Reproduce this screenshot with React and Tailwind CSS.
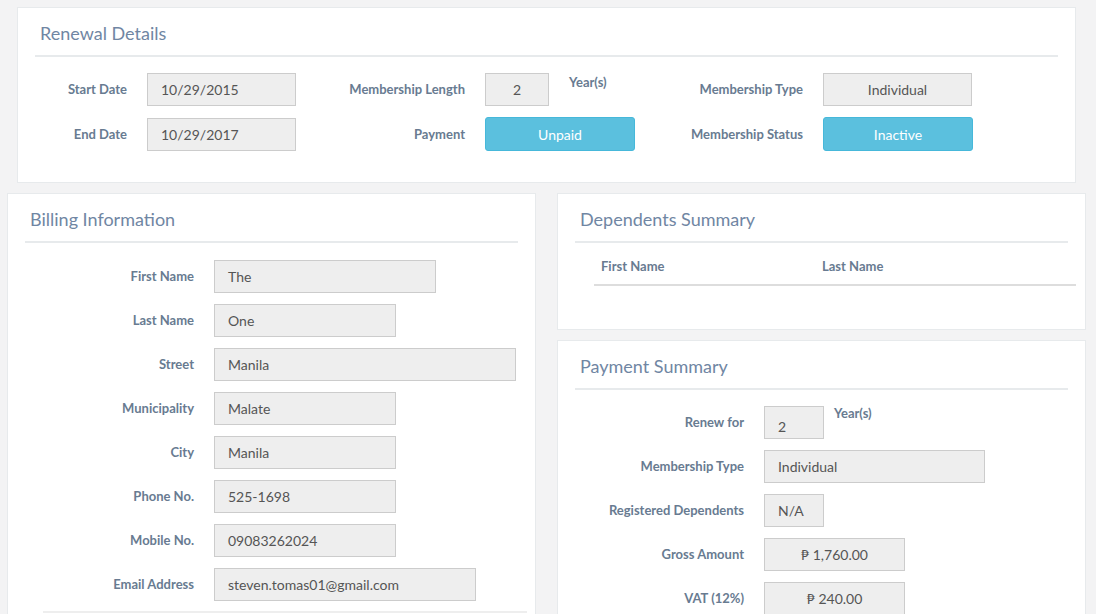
const font = { fontFamily: "Lato, 'Open Sans', sans-serif" };

function Field({ value, w, center, className = "" }) {
  return (
    <div
      className={`h-[33px] border border-[#cccccc] bg-[#eeeeee] text-[14px] text-[#555555] flex items-center ${
        center ? "justify-center" : "pl-[13px]"
      } ${className}`}
      style={{ width: w }}
    >
      {value}
    </div>
  );
}

function InfoButton({ children }) {
  return (
    <div className="h-[34px] w-[150px] rounded-[3px] border border-[#46b8da] bg-[#5bc0de] text-white text-[14px] flex items-center justify-center">
      {children}
    </div>
  );
}

function Label({ children, w }) {
  return (
    <div className="text-right text-[13px] font-bold text-[#687b91] shrink-0 pt-[1px]" style={{ width: w }}>
      {children}
    </div>
  );
}

function Card({ title, children, className = "" }) {
  return (
    <div className={`bg-white border border-[#e7eaec] px-[17px] ${className}`}>
      <div className="pt-[14px] pb-[11px] pl-[5px] text-[18px] leading-[22px] text-[#7086a3]">{title}</div>
      <div className="h-[2px] bg-[#e7eaec]" />
      {children}
    </div>
  );
}

function FormRow({ label, children }) {
  return (
    <div className="flex items-center">
      <Label w="169px">{label}</Label>
      <div className="ml-[20px] flex items-start">{children}</div>
    </div>
  );
}

export default function App() {
  return (
    <div className="min-h-screen bg-[#f3f3f4] pt-[7px] pb-6" style={font}>
      <Card title="Renewal Details" className="ml-[17px] w-[1059px] pb-[31px]">
        <div className="mt-[16px] flex flex-col gap-[11px]">
          <div className="flex items-center">
            <Label w="92px">Start Date</Label>
            <Field value="10/29/2015" w="149px" className="ml-[20px]" />
            <Label w="169px">Membership Length</Label>
            <div className="ml-[20px] w-[150px] flex items-start">
              <Field value="2" w="64px" center />
              <span className="ml-[20px] text-[13px] font-bold text-[#687b91] leading-[18px]">Year(s)</span>
            </div>
            <Label w="168px">Membership Type</Label>
            <Field value="Individual" w="149px" center className="ml-[20px]" />
          </div>
          <div className="flex items-center">
            <Label w="92px">End Date</Label>
            <Field value="10/29/2017" w="149px" className="ml-[20px]" />
            <Label w="169px">Payment</Label>
            <div className="ml-[20px]">
              <InfoButton>Unpaid</InfoButton>
            </div>
            <Label w="168px">Membership Status</Label>
            <div className="ml-[20px]">
              <InfoButton>Inactive</InfoButton>
            </div>
          </div>
        </div>
      </Card>

      <div className="mt-[10px] ml-[7px] flex gap-[21px] items-start">
        <Card title="Billing Information" className="w-[529px]">
          <div className="mt-[17px] flex flex-col gap-[11px]">
            <FormRow label="First Name"><Field value="The" w="222px" /></FormRow>
            <FormRow label="Last Name"><Field value="One" w="182px" /></FormRow>
            <FormRow label="Street"><Field value="Manila" w="302px" /></FormRow>
            <FormRow label="Municipality"><Field value="Malate" w="182px" /></FormRow>
            <FormRow label="City"><Field value="Manila" w="182px" /></FormRow>
            <FormRow label="Phone No."><Field value="525-1698" w="182px" /></FormRow>
            <FormRow label="Mobile No."><Field value="09083262024" w="182px" /></FormRow>
            <FormRow label="Email Address"><Field value="steven.tomas01@gmail.com" w="262px" /></FormRow>
          </div>
          <div className="mt-[10px] ml-[18px] mr-[-9px] h-[2px] bg-[#eeeeee]" />
          <div className="h-[40px]" />
        </Card>

        <div className="flex flex-col gap-[10px]">
          <Card title="Dependents Summary" className="w-[529px] h-[137px]">
            <div className="mt-[5px] ml-[19px] mr-[-8px]">
              <div className="flex text-[13px] font-bold text-[#687b91] leading-[20px] py-[8px] border-b-2 border-[#dddddd]">
                <div className="w-[220px] pl-[7px]">First Name</div>
                <div className="pl-[8px]">Last Name</div>
              </div>
            </div>
          </Card>

          <Card title="Payment Summary" className="w-[529px]">
            <div className="mt-[16px] flex flex-col gap-[11px]">
              <FormRow label="Renew for">
                <div className="h-[33px] w-[60px] border border-[#cccccc] bg-[#eeeeee] text-[14px] text-[#555555] pl-[13px] pt-[11px] leading-[18px]">2</div>
                <span className="ml-[10px] -mt-[2px] text-[13px] font-bold text-[#687b91] leading-[18px]">Year(s)</span>
              </FormRow>
              <FormRow label="Membership Type"><Field value="Individual" w="221px" /></FormRow>
              <FormRow label="Registered Dependents"><Field value="N/A" w="60px" /></FormRow>
              <FormRow label="Gross Amount"><Field value="₱ 1,760.00" w="141px" center /></FormRow>
              <FormRow label="VAT (12%)"><Field value="₱ 240.00" w="141px" center /></FormRow>
            </div>
            <div className="h-[40px]" />
          </Card>
        </div>
      </div>
    </div>
  );
}
